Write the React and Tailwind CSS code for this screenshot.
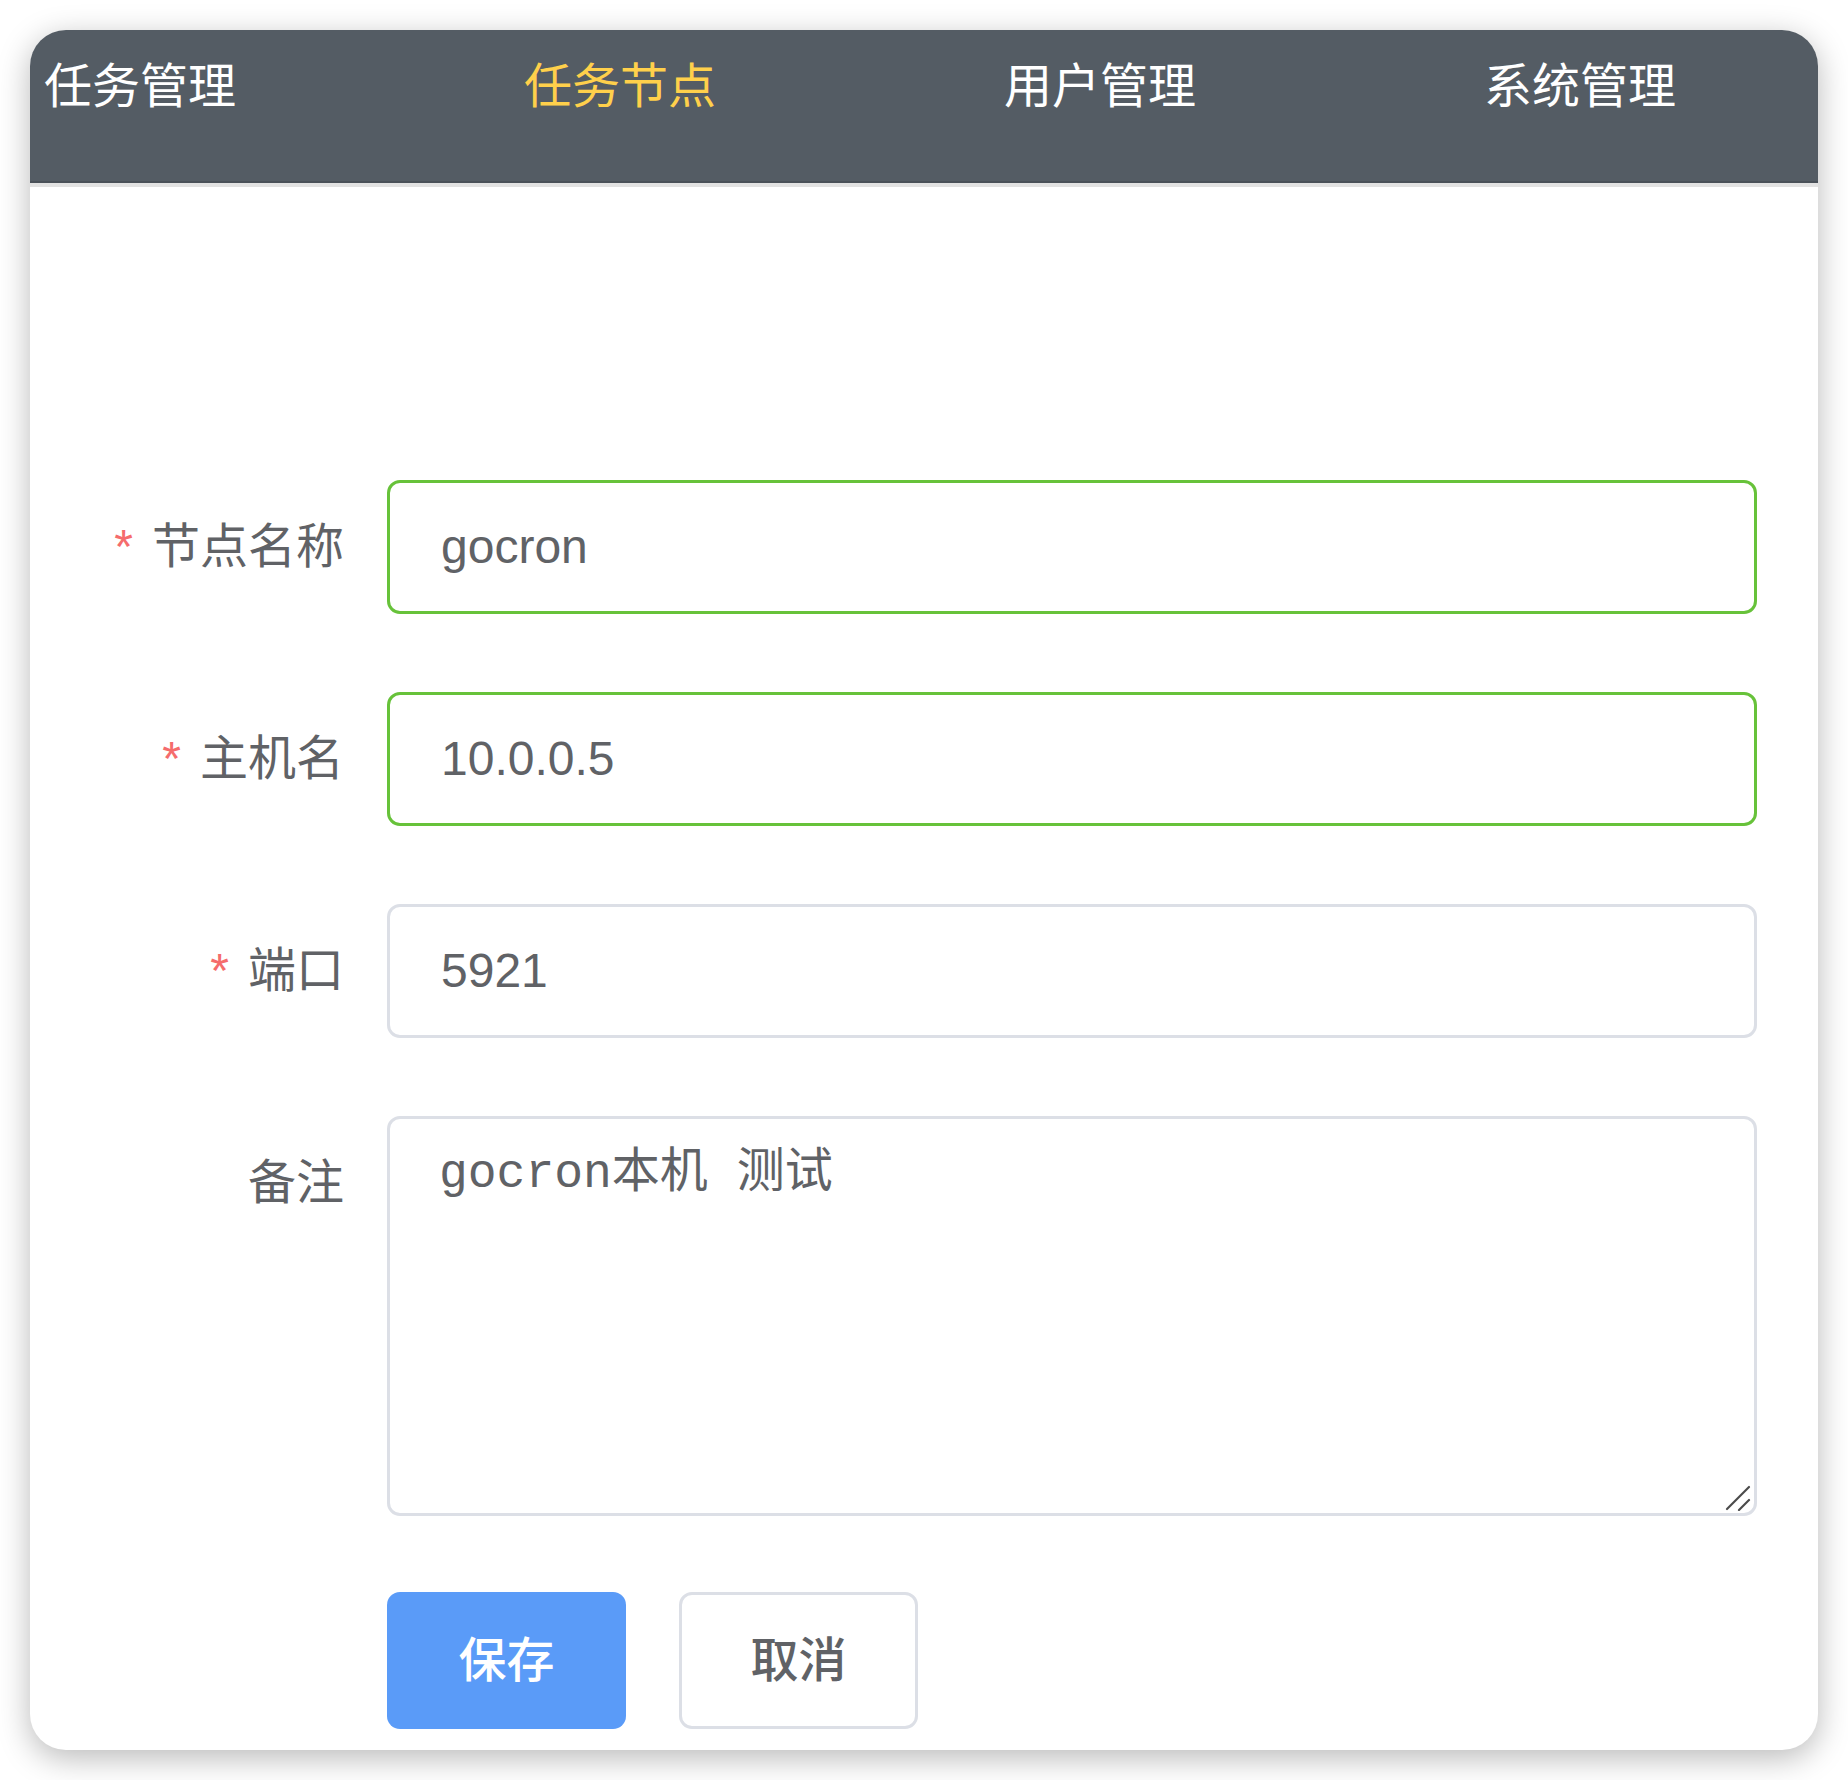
import React from 'react';

const navItems = [
  { label: '任务管理', active: false },
  { label: '任务节点', active: true },
  { label: '用户管理', active: false },
  { label: '系统管理', active: false },
];

const fields = [
  { label: '节点名称', value: 'gocron', required: true, valid: true },
  { label: '主机名', value: '10.0.0.5', required: true, valid: true },
  { label: '端口', value: '5921', required: true, valid: false },
];

const FormLabel = ({ text, required }) => (
  <div className="w-[357px] shrink-0 pr-[43px] text-right text-[48px] text-[#606266]">
    {required && <span className="mr-[19px] text-[#f56c6c]">*</span>}
    {text}
  </div>
);

const App = () => {
  return (
    <div
      className="h-[1780px] w-[1848px] bg-white p-[30px]"
      style={{ fontFamily: '"Liberation Sans", "Noto Sans CJK SC", sans-serif' }}
    >
      <div className="h-full w-full overflow-hidden rounded-[36px] bg-white shadow-[0_8px_32px_rgba(0,0,0,0.28)]">
        {/* top menu */}
        <div className="flex h-[151px] bg-[#545c64] pl-[14px] pt-[33px]">
          {navItems.map(item => (
            <div
              key={item.label}
              className={`w-[480px] shrink-0 text-[48px] leading-[48px] ${item.active ? 'text-[#ffd04b]' : 'text-white'}`}
            >
              {item.label}
            </div>
          ))}
        </div>
        <div className="h-[2px] bg-[#4a5159]" />
        <div className="h-[4px] bg-[#e2e2e2]" />

        {/* node form */}
        <div className="mt-[293px] pr-[61px]">
          {fields.map(f => (
            <div key={f.label} className="mb-[78px] flex items-center">
              <FormLabel text={f.label} required={f.required} />
              <div
                className={`flex h-[134px] flex-1 items-center rounded-[13px] border-[3px] px-[51px] text-[48px] text-[#606266] ${f.valid ? 'border-[#67c23a]' : 'border-[#dcdfe6]'}`}
              >
                {f.value}
              </div>
            </div>
          ))}

          <div className="mb-[76px] flex items-start">
            <div className="flex h-[134px] items-center">
              <FormLabel text="备注" required={false} />
            </div>
            <div className="relative flex-1">
              <textarea
                readOnly
                value="gocron本机 测试"
                className="block h-[400px] w-full resize-none rounded-[13px] border-[3px] border-[#dcdfe6] bg-white px-[49px] pt-[19px] text-[48px] leading-[1.5] text-[#606266] outline-none"
                style={{ fontFamily: '"Liberation Mono", "Noto Sans CJK SC", monospace' }}
              />
              <svg className="absolute bottom-[5px] right-[6px]" width="26" height="26" viewBox="0 0 26 26">
                <line x1="24" y1="2" x2="2" y2="24" stroke="#4a4a4a" strokeWidth="2.2" strokeLinecap="round" />
                <line x1="24" y1="15" x2="14" y2="25" stroke="#4a4a4a" strokeWidth="2.2" strokeLinecap="round" />
              </svg>
            </div>
          </div>

          <div className="flex pl-[357px]">
            <button className="h-[137px] w-[239px] rounded-[13px] bg-[#5a9bf8] text-[48px] font-medium text-white">
              保存
            </button>
            <button className="ml-[53px] h-[137px] w-[239px] rounded-[13px] border-[3px] border-[#dcdfe6] bg-white text-[48px] font-medium text-[#606266]">
              取消
            </button>
          </div>
        </div>
      </div>
    </div>
  );
};

export default App;
